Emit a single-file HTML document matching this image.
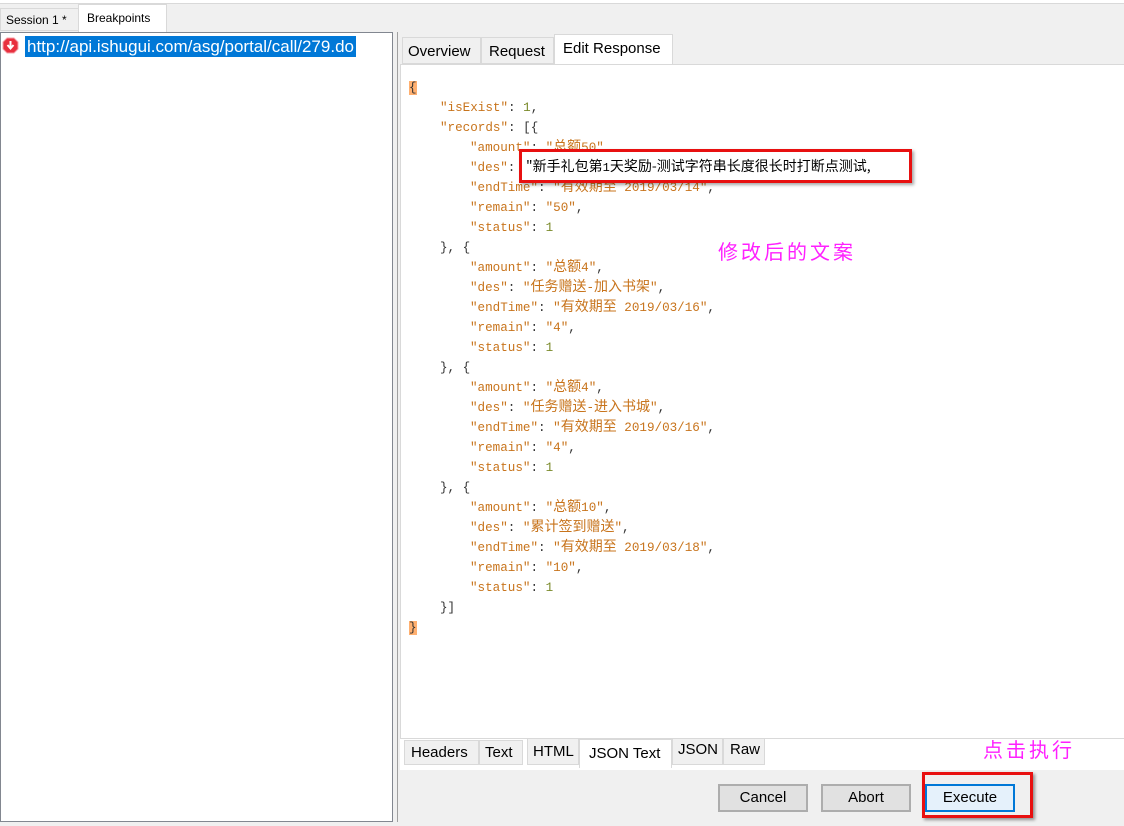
<!DOCTYPE html>
<html><head><meta charset="utf-8">
<style>
*{margin:0;padding:0;box-sizing:border-box}
body{width:1124px;height:826px;background:#f0f0f0;position:relative;overflow:hidden;font-family:"Liberation Sans","Noto Sans CJK SC",sans-serif;font-size:13px;color:#000}
.abs{position:absolute}
.tab{position:absolute;border:1px solid #d9d9d9;background:#f0f0f0;white-space:nowrap}
.code{position:absolute;font-family:"Liberation Mono","Noto Sans CJK SC",monospace;font-size:12.6px;white-space:pre;line-height:20px;height:20px;color:#333}
.k{color:#c8741c}
.s{color:#c8741c}
.n{color:#7a8a2a}
.c{font-size:14px;line-height:0;font-family:"Noto Sans CJK SC",sans-serif}
.btn{position:absolute;top:784px;width:90px;height:28px;border:2px solid #adadad;background:#e1e1e1;text-align:center;line-height:24px;font-size:15px}
</style></head><body>
<div class="abs" style="left:0;top:0;width:1124px;height:4px;background:#fff;border-bottom:1px solid #d9d9d9"></div>
<div class="tab" style="left:0;top:8px;width:79px;height:23px;padding:4px 0 0 5px;font-size:12px">Session 1 *</div>
<div class="tab" style="left:78px;top:4px;width:89px;height:28px;background:#fff;border-bottom:none;padding:6px 0 0 8px;font-size:12px">Breakpoints</div>
<div class="abs" style="left:0;top:32px;width:393px;height:790px;background:#fff;border:1px solid #828790"></div>
<svg class="abs" style="left:2px;top:37px" width="17" height="17" viewBox="0 0 17 17"><polygon points="5,1 12,1 16,5 16,12 12,16 5,16 1,12 1,5" fill="#e8303e" stroke="#f5a0a8"/><path d="M8.5 4v7M5.5 8l3 3.5 3-3.5" stroke="#fff" stroke-width="2" fill="none"/></svg>
<div class="abs" style="left:25px;top:36px;height:21px;padding:0 2px;background:#0078d7;color:#fff;font-size:17px;line-height:21px">http://api.ishugui.com/asg/portal/call/279.do</div>
<div class="abs" style="left:397px;top:32px;width:1px;height:790px;background:#a0a0a0"></div>
<div class="tab" style="left:402px;top:37px;width:79px;height:27px;padding:5px 0 0 5px;font-size:15px">Overview</div>
<div class="tab" style="left:481px;top:37px;width:73px;height:27px;padding:5px 0 0 7px;font-size:15px">Request</div>
<div class="tab" style="left:554px;top:34px;width:119px;height:31px;background:#fff;border-bottom:none;padding:5px 0 0 8px;font-size:15px">Edit Response</div>
<div class="abs" style="left:400px;top:64px;width:724px;height:675px;background:#fff;border-top:1px solid #d9d9d9;border-left:1px solid #d9d9d9"></div>
<div class="abs" style="left:400px;top:738px;width:724px;height:32px;background:#fff;border-top:1px solid #d9d9d9"></div>
<div class="tab" style="left:404px;top:740px;width:75px;height:25px;padding:3px 0 0 6px;font-size:15px">Headers</div>
<div class="tab" style="left:479px;top:740px;width:44px;height:25px;padding:3px 0 0 5px;font-size:15px">Text</div>
<div class="tab" style="left:527px;top:738px;width:52px;height:27px;padding:4px 0 0 5px;font-size:15px">HTML</div>
<div class="tab" style="left:579px;top:739px;width:93px;height:29px;background:#fff;border-bottom:none;padding:5px 0 0 9px;font-size:15px">JSON Text</div>
<div class="tab" style="left:672px;top:738px;width:51px;height:27px;padding:2px 0 0 5px;font-size:15px">JSON</div>
<div class="tab" style="left:723px;top:738px;width:42px;height:27px;padding:2px 0 0 6px;font-size:15px">Raw</div>
<div class="abs" style="left:400px;top:770px;width:724px;height:52px;background:#f0f0f0"></div>
<div class="btn" style="left:718px">Cancel</div>
<div class="btn" style="left:821px">Abort</div>
<div class="btn" style="left:925px;background:#e5f1fb;border-color:#0078d7">Execute</div>
<div class="abs" style="left:922px;top:772px;width:111px;height:46px;border:3px solid #e81010;box-shadow:2px 2px 3px rgba(0,0,0,.4)"></div>
<div class="abs" style="left:983px;top:734px;color:#ff20ff;font-size:20px;letter-spacing:3px;font-family:'Noto Sans CJK SC',sans-serif">点击执行</div>
<div class="code" style="left:409px;top:78px"><span style="background:#ffb070">{</span></div>
<div class="code" style="left:440px;top:98px"><span class="k">"isExist"</span>: <span class="n">1</span>,</div>
<div class="code" style="left:440px;top:118px"><span class="k">"records"</span>: [{</div>
<div class="code" style="left:470px;top:138px"><span class="k">"amount"</span>: <span class="s">"<span class="c">总额</span>50"</span>,</div>
<div class="code" style="left:470px;top:158px"><span class="k">"des"</span>: </div>
<div class="code" style="left:470px;top:178px"><span class="k">"endTime"</span>: <span class="s">"<span class="c">有效期至</span> 2019/03/14"</span>,</div>
<div class="code" style="left:470px;top:198px"><span class="k">"remain"</span>: <span class="s">"50"</span>,</div>
<div class="code" style="left:470px;top:218px"><span class="k">"status"</span>: <span class="n">1</span></div>
<div class="code" style="left:440px;top:238px">}, {</div>
<div class="code" style="left:470px;top:258px"><span class="k">"amount"</span>: <span class="s">"<span class="c">总额</span>4"</span>,</div>
<div class="code" style="left:470px;top:278px"><span class="k">"des"</span>: <span class="s">"<span class="c">任务赠送</span>-<span class="c">加入书架</span>"</span>,</div>
<div class="code" style="left:470px;top:298px"><span class="k">"endTime"</span>: <span class="s">"<span class="c">有效期至</span> 2019/03/16"</span>,</div>
<div class="code" style="left:470px;top:318px"><span class="k">"remain"</span>: <span class="s">"4"</span>,</div>
<div class="code" style="left:470px;top:338px"><span class="k">"status"</span>: <span class="n">1</span></div>
<div class="code" style="left:440px;top:358px">}, {</div>
<div class="code" style="left:470px;top:378px"><span class="k">"amount"</span>: <span class="s">"<span class="c">总额</span>4"</span>,</div>
<div class="code" style="left:470px;top:398px"><span class="k">"des"</span>: <span class="s">"<span class="c">任务赠送</span>-<span class="c">进入书城</span>"</span>,</div>
<div class="code" style="left:470px;top:418px"><span class="k">"endTime"</span>: <span class="s">"<span class="c">有效期至</span> 2019/03/16"</span>,</div>
<div class="code" style="left:470px;top:438px"><span class="k">"remain"</span>: <span class="s">"4"</span>,</div>
<div class="code" style="left:470px;top:458px"><span class="k">"status"</span>: <span class="n">1</span></div>
<div class="code" style="left:440px;top:478px">}, {</div>
<div class="code" style="left:470px;top:498px"><span class="k">"amount"</span>: <span class="s">"<span class="c">总额</span>10"</span>,</div>
<div class="code" style="left:470px;top:518px"><span class="k">"des"</span>: <span class="s">"<span class="c">累计签到赠送</span>"</span>,</div>
<div class="code" style="left:470px;top:538px"><span class="k">"endTime"</span>: <span class="s">"<span class="c">有效期至</span> 2019/03/18"</span>,</div>
<div class="code" style="left:470px;top:558px"><span class="k">"remain"</span>: <span class="s">"10"</span>,</div>
<div class="code" style="left:470px;top:578px"><span class="k">"status"</span>: <span class="n">1</span></div>
<div class="code" style="left:440px;top:598px">}]</div>
<div class="code" style="left:409px;top:618px"><span style="background:#ffb070">}</span></div>
<div class="abs" style="left:519px;top:149px;width:393px;height:34px;background:#fff;border:3px solid #e81010;box-shadow:2px 2px 3px rgba(0,0,0,.35)"></div>
<div class="abs" style="left:526px;top:156px;font-size:14px;font-family:'Noto Sans CJK SC',sans-serif;line-height:20px;white-space:nowrap">"新手礼包第<span style="font-family:'Liberation Mono',monospace;font-size:12px">1</span>天奖励-测试字符串长度很长时打断点测试,</div>
<div class="abs" style="left:718px;top:236px;color:#ff20ff;font-size:20px;letter-spacing:3px;font-family:'Noto Sans CJK SC',sans-serif">修改后的文案</div>
</body></html>
